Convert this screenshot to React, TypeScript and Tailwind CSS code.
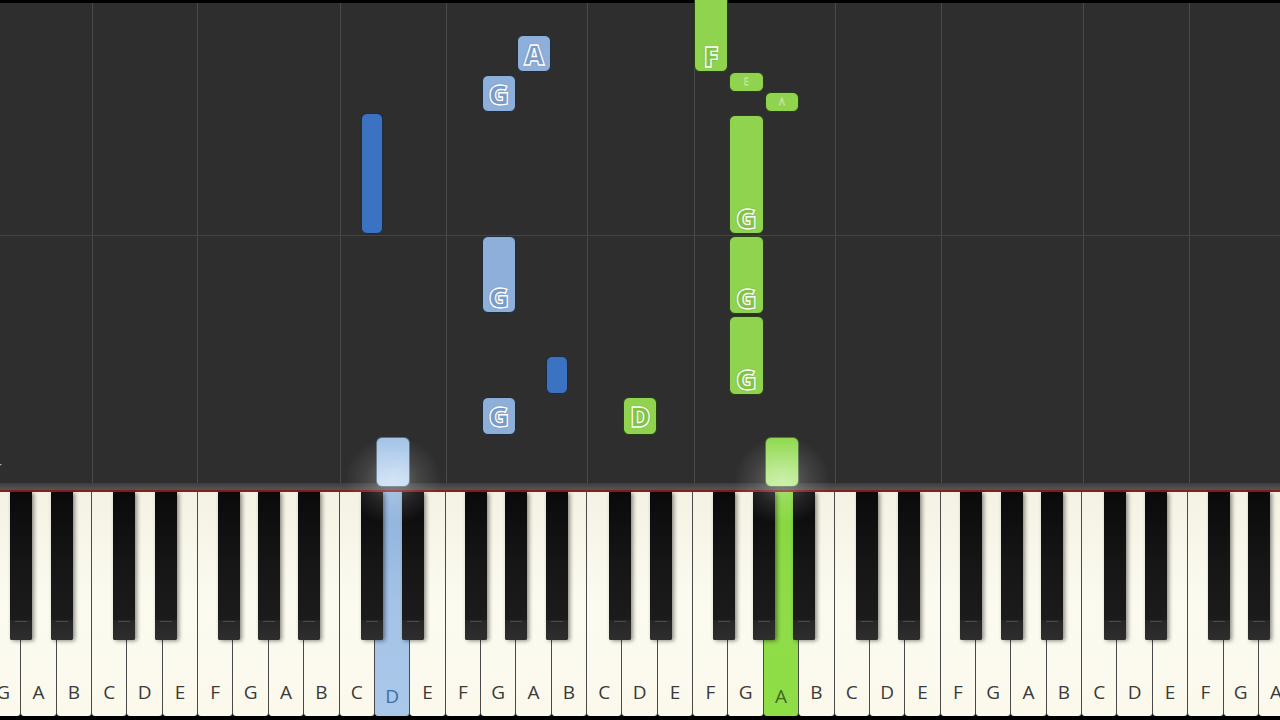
import React from "react";

const W = 35.37;
const X0 = -14.07;
const NAMES = ["G", "A", "B", "C", "D", "E", "F"];
const WHITE_COUNT = 38;

const BLACK_OFFSETS: Record<string, number> = { C: -3, D: 3, F: -5, G: 0, A: 5 };

type NoteT = {
  k: number;
  black?: boolean;
  y: number;
  h: number;
  c: "lb" | "db" | "g";
  label?: string;
  small?: boolean;
  bottom?: boolean;
  glow?: boolean;
};

const keyLeft = (i: number) => X0 + i * W;
const blackCenter = (i: number) => X0 + (i + 1) * W + (BLACK_OFFSETS[NAMES[i % 7]] ?? 0);

const notes: NoteT[] = [
  { k: 15, y: 35, h: 37, c: "lb", label: "A" },
  { k: 14, y: 75, h: 37, c: "lb", label: "G" },
  { k: 10, black: true, y: 113, h: 121, c: "db" },
  { k: 14, y: 236, h: 77, c: "lb", label: "G", bottom: true },
  { k: 14, y: 397, h: 38, c: "lb", label: "G" },
  { k: 15, black: true, y: 356, h: 38, c: "db" },
  { k: 11, y: 437, h: 50, c: "lb", glow: true },
  { k: 18, y: 397, h: 38, c: "g", label: "D" },
  { k: 20, y: -8, h: 80, c: "g", label: "F", bottom: true },
  { k: 21, y: 72, h: 20, c: "g", label: "E", small: true },
  { k: 22, y: 92, h: 20, c: "g", label: "A", small: true },
  { k: 21, y: 115, h: 119, c: "g", label: "G", bottom: true },
  { k: 21, y: 236, h: 78, c: "g", label: "G", bottom: true },
  { k: 21, y: 316, h: 79, c: "g", label: "G", bottom: true },
  { k: 22, y: 437, h: 50, c: "g", glow: true },
];

const gridXs = [92, 197, 340, 446, 587, 694, 835, 941, 1083, 1189];

function Note({ n }: { n: NoteT }) {
  const left = n.black ? blackCenter(n.k) - 11 : keyLeft(n.k) + 0.5;
  const width = n.black ? 22 : W - 1;
  const bg =
    n.c === "lb"
      ? n.glow
        ? "bg-gradient-to-b from-[#a2c2e8] to-[#c4daf2] border-[#5d6d7d]"
        : "bg-[#8eafd9] border-[#1f2c3b]"
      : n.c === "db"
      ? "bg-[#3b73c2] border-[#1c2b40]"
      : n.glow
      ? "bg-gradient-to-b from-[#8fd94c] to-[#b9ea8a] border-[#55704a]"
      : "bg-[#8fd34f] border-[#273f12]";
  const fill = n.c === "g" ? "text-[#80c444]" : "text-[#7a9cc9]";
  return (
    <div
      className={`absolute rounded-[6px] border ${bg} flex justify-center ${
        n.bottom ? "items-end" : "items-center"
      }`}
      style={{ left, width, top: n.y - 3, height: n.h }}
    >
      {n.label && !n.small && (
        <span
          className={`font-['Open_Sans'] font-extrabold text-[28px] leading-[30px] ${fill} [-webkit-text-stroke:1.3px_#ffffff] [text-shadow:0_0_1.5px_#1b2630]`}
        >
          {n.label}
        </span>
      )}
      {n.label && n.small && (
        <span className="font-['Open_Sans'] text-[9px] leading-[10px] text-[#6fae38] [-webkit-text-stroke:0.4px_#e8ffd8]">
          {n.label}
        </span>
      )}
    </div>
  );
}

function WhiteKey({ name, idx }: { name: string; idx: number }) {
  const pressedBlue = idx === 11;
  const pressedGreen = idx === 22;
  const bg = pressedBlue
    ? "bg-gradient-to-b from-[#8fb2da] via-[#a4c3e6] to-[#a9c8ea]"
    : pressedGreen
    ? "bg-gradient-to-b from-[#86d63f] via-[#8fdc48] to-[#8ede47]"
    : "bg-gradient-to-b from-[#f4f2e4] via-[#fcfbf0] to-[#fbf9ec]";
  const txt = pressedBlue ? "text-[#3b6ea6] pb-[8px]" : pressedGreen ? "text-[#3d6b22] pb-[8px]" : "text-[#3a3a3a] pb-[12px]";
  return (
    <div className="w-[35.37px] h-[224px] shrink-0 border-r border-[#4a4a4a] bg-[#2a2a2a] rounded-b-[3px]">
      <div className={`w-full h-full rounded-b-[3px] ${bg} flex items-end justify-center ${txt}`}>
        <span className="font-['Open_Sans'] text-[19px] leading-[24px]">{name}</span>
      </div>
    </div>
  );
}

function BlackKey({ i }: { i: number }) {
  const c = blackCenter(i);
  return (
    <div
      className="absolute top-0 w-[22px] h-[148px] rounded-b-[2px] bg-gradient-to-b from-[#0a0a0a] via-[#161616] to-[#1d1d1d] shadow-[2px_1px_4px_rgba(0,0,0,0.45)] flex flex-col justify-end"
      style={{ left: c - 11 }}
    >
      <div className="h-[20px] w-full bg-gradient-to-b from-[#262626] to-[#2e2e2e] rounded-b-[2px] flex justify-center">
        <div className="mt-[1px] w-[12px] h-[1px] bg-[#4a4a4a]" />
      </div>
    </div>
  );
}

export default function App() {
  const whites = Array.from({ length: WHITE_COUNT }, (_, i) => NAMES[i % 7]);
  const blacks = whites
    .map((n, i) => ({ n, i }))
    .filter(({ n }) => n in BLACK_OFFSETS);
  return (
    <div className="relative w-[1280px] h-[720px] bg-black overflow-hidden flex flex-col">
      <div className="h-[3px] bg-black shrink-0" />
      <div className="relative h-[480px] shrink-0 bg-[#2e2e2e]">
        {gridXs.map((x) => (
          <div key={x} className="absolute top-0 bottom-0 w-[1px] bg-[#4a4a4a]" style={{ left: x }} />
        ))}
        <div className="absolute left-0 right-0 top-[232px] h-[1px] bg-[#434343]" />
        <span className="absolute left-[-5px] top-[452px] font-['Open_Sans'] text-[16px] text-[#b5b5b5]">r</span>
        {notes.map((n, i) => (
          <Note key={i} n={n} />
        ))}
      </div>
      <div className="h-[7px] shrink-0 bg-gradient-to-b from-[#3e3e3e] to-[#555]" />
      <div className="h-[2px] shrink-0 bg-[#8c1d1d]" />
      <div className="relative h-[228px] shrink-0 bg-black">
        <div className="flex ml-[-14.07px]">
          {whites.map((n, i) => (
            <WhiteKey key={i} name={n} idx={i} />
          ))}
        </div>
        {blacks.map(({ i }) => (
          <BlackKey key={i} i={i} />
        ))}
      </div>
      {/* glows */}
      <div className="absolute left-[338px] top-[430px] w-[110px] h-[100px] pointer-events-none bg-[radial-gradient(ellipse_at_center,rgba(255,255,255,0.3)_0%,rgba(255,255,255,0.1)_35%,rgba(255,255,255,0)_62%)]" />
      <div className="absolute left-[727px] top-[430px] w-[110px] h-[100px] pointer-events-none bg-[radial-gradient(ellipse_at_center,rgba(255,255,255,0.3)_0%,rgba(255,255,255,0.1)_35%,rgba(255,255,255,0)_62%)]" />
    </div>
  );
}
